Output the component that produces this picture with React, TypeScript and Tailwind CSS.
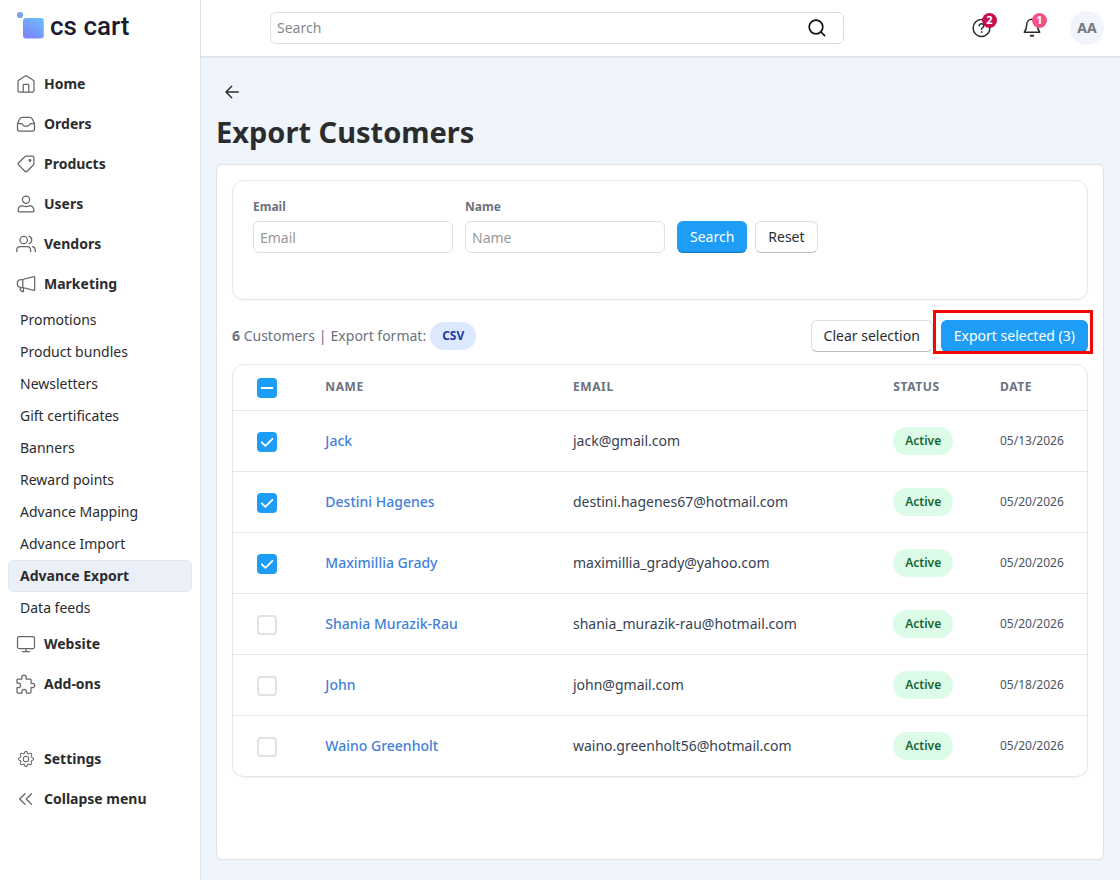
import { useEffect, useRef, useState } from 'react'
import type { InputHTMLAttributes, ReactNode } from 'react'
import { BsGear } from 'react-icons/bs'

interface Customer {
  id: number
  name: string
  email: string
  status: string
  date: string
}

interface NavItem {
  label: string
  icon: ReactNode
}

const customers: Customer[] = [
  { id: 1, name: 'Jack', email: 'jack@gmail.com', status: 'Active', date: '05/13/2026' },
  { id: 2, name: 'Destini Hagenes', email: 'destini.hagenes67@hotmail.com', status: 'Active', date: '05/20/2026' },
  { id: 3, name: 'Maximillia Grady', email: 'maximillia_grady@yahoo.com', status: 'Active', date: '05/20/2026' },
  { id: 4, name: 'Shania Murazik-Rau', email: 'shania_murazik-rau@hotmail.com', status: 'Active', date: '05/20/2026' },
  { id: 5, name: 'John', email: 'john@gmail.com', status: 'Active', date: '05/18/2026' },
  { id: 6, name: 'Waino Greenholt', email: 'waino.greenholt56@hotmail.com', status: 'Active', date: '05/20/2026' },
]

const marketingLinks = [
  'Promotions',
  'Product bundles',
  'Newsletters',
  'Gift certificates',
  'Banners',
  'Reward points',
  'Advance Mapping',
  'Advance Import',
  'Advance Export',
  'Data feeds',
]

function Icon({ children }: { children: ReactNode }) {
  return (
    <svg
      viewBox="0 0 20 20"
      className="size-5 shrink-0 text-[#666666]"
      fill="none"
      stroke="currentColor"
      strokeWidth="1.25"
      strokeLinecap="round"
      strokeLinejoin="round"
      aria-hidden="true"
    >
      {children}
    </svg>
  )
}

const topItems: NavItem[] = [
  {
    label: 'Home',
    icon: (
      <Icon>
        <path d="M2 7.6q0-.8.7-1.3L9.2 2q.8-.5 1.6 0l6.500 4.300q.7.500.7 1.300v8.900q0 1.700-1.700 1.700H3.700Q2 18.200 2 16.500zM7.200 18.200v-7q0-.8.8-.8h4q.8 0 .8.8v7" />
      </Icon>
    ),
  },
  {
    label: 'Orders',
    icon: (
      <Icon>
        <path d="M1.500 9.500 4 4.500q.6-1.200 2-1.200h8q1.400 0 2 1.200l2.500 5v5.500q0 2-2 2h-13q-2 0-2-2zM1.500 9.500H5q1 0 1.400.9.500 1.600 2 1.600h3.200q1.500 0 2-1.600.4-.9 1.400-.9h3.500" />
      </Icon>
    ),
  },
  {
    label: 'Products',
    icon: (
      <Icon>
        <path d="M10.200 2.200h6q1.700 0 1.700 1.700v5.700q0 .8-.6 1.400l-6.200 6.200q-1.100 1.100-2.200 0l-6.300-6.300q-1.100-1.100 0-2.200l6.200-5.900q.6-.6 1.400-.6z" />
        <circle cx="14" cy="6.500" r=".8" fill="currentColor" />
      </Icon>
    ),
  },
  {
    label: 'Users',
    icon: (
      <Icon>
        <circle cx="10" cy="5.700" r="3.600" />
        <path d="M6.400 11.700C3.600 12 2 14 2 16.800q0 1.100 1.100 1.100h13.800q1.100 0 1.100-1.100c0-2.800-1.600-4.800-4.400-5.100-2.400 1.100-4.800 1.100-7.200 0z" />
      </Icon>
    ),
  },
  {
    label: 'Vendors',
    icon: (
      <Icon>
        <circle cx="7.700" cy="6" r="3.700" />
        <path d="M13.200 2.300a3.900 3.900 0 0 1 0 7.300M.8 17.700v-1.500q0-3.500 3.500-3.500h6.800q3.500 0 3.500 3.500v1.500M16.500 12.700q2.800.6 2.800 3.600v1.400" />
      </Icon>
    ),
  },
  {
    label: 'Marketing',
    icon: (
      <Icon>
        <path d="M6.800 5.500 17.700 2.600q1-.2 1 .8v12.200q0 1-1 .8L6.800 13.500M6.800 5.500v8H5.500q-4.200 0-4.200-4t4.200-4zM4 13.400q.1 3.700 2.700 4.300.8.100.8-.6v-3.400" />
      </Icon>
    ),
  },
]

const lowerItems: NavItem[] = [
  {
    label: 'Website',
    icon: (
      <Icon>
        <rect x="1.500" y="2.500" width="17" height="12.200" rx="1.800" />
        <path d="M10 14.700v2.700M6.400 17.500h7.200" />
      </Icon>
    ),
  },
  {
    label: 'Add-ons',
    icon: (
      <Icon>
        <path d="M1 8.700V6q0-1 1-1h3.800V3.200a2.200 2.200 0 0 1 4.400 0V5H14q1 0 1 1v3.300h1.600a2.200 2.200 0 0 1 0 4.400H15V18q0 1-1 1h-3.600v-1.400a2.200 2.200 0 0 0-4.400 0V19H2q-1 0-1-1v-4.400h1.400a2.200 2.200 0 0 0 0-4.400H1z" />
      </Icon>
    ),
  },
]

const footerItems: NavItem[] = [
  {
    label: 'Settings',
    icon: (
      <span className="flex size-5 items-center justify-center text-[#666666]">
        <BsGear size={16} />
      </span>
    ),
  },
  {
    label: 'Collapse menu',
    icon: (
      <Icon>
        <path d="M9 4.700 3.700 10 9 15.300M15.500 4.700 10.200 10l5.300 5.300" />
      </Icon>
    ),
  },
]

function NavLink({ label, icon }: NavItem) {
  return (
    <a href="#" className="flex h-10 items-center gap-2 px-4 text-sm font-bold text-[#2b2c2e]">
      {icon}
      {label}
    </a>
  )
}

function Sidebar() {
  return (
    <aside className="w-[201px] shrink-0 border-r border-[#dfe3ea] bg-white">
      <a href="#" className="flex h-16 items-start gap-1 px-4 pt-2 text-[#1b1b2f]">
        <svg viewBox="0 0 30 32" className="h-8 w-[30px]" aria-hidden="true">
          <defs>
            <linearGradient id="logo" x1="0.2" y1="1" x2="0.8" y2="0">
              <stop offset="0" stopColor="#7b83fb" />
              <stop offset="1" stopColor="#6dbcfb" />
            </linearGradient>
          </defs>
          <circle cx="4" cy="7" r="3.100" fill="#7aa2ee" />
          <rect x="7" y="10" width="20.800" height="20.600" rx="3" fill="url(#logo)" />
        </svg>
        <span className="font-['Roboto',sans-serif] text-[26px] leading-9 font-medium">cs cart</span>
      </a>
      <nav>
        {topItems.map((item) => (
          <NavLink key={item.label} {...item} />
        ))}
        <ul className="px-2">
          {marketingLinks.map((label) => (
            <li key={label}>
              <a
                href="#"
                className={
                  label === 'Advance Export'
                    ? 'flex h-8 items-center rounded-md border border-[#e1e6ee] bg-[#ebf0f8] px-[11px] text-sm font-bold text-[#2b2c2e]'
                    : 'flex h-8 items-center px-3 text-sm text-[#2b2c2e]'
                }
              >
                {label}
              </a>
            </li>
          ))}
        </ul>
        {lowerItems.map((item) => (
          <NavLink key={item.label} {...item} />
        ))}
      </nav>
      <div className="mt-[35px]">
        {footerItems.map((item) => (
          <NavLink key={item.label} {...item} />
        ))}
      </div>
    </aside>
  )
}

function Header() {
  return (
    <header className="flex h-[57px] items-center border-b border-[#dfe3ea] bg-white pr-4 pl-[69px] shadow-xs">
      <form className="flex h-8 w-full max-w-[574px] items-center rounded-md border border-[#dcdfe4] pr-4">
        <input
          type="search"
          aria-label="Search"
          placeholder="Search"
          className="min-w-0 flex-1 px-1.5 text-sm outline-none placeholder:text-[#85878c]"
        />
        <button type="button" aria-label="Submit search">
          <svg viewBox="0 0 20 20" className="size-5" fill="none" stroke="#111111" strokeWidth="1.700" strokeLinecap="round">
            <circle cx="9" cy="9" r="6.800" />
            <path d="m14 14 3.600 3.600" />
          </svg>
        </button>
      </form>
      <div className="ml-auto flex items-center gap-7">
        <button type="button" aria-label="Help" className="relative">
          <svg viewBox="0 0 22 22" className="size-[22px]" fill="none" stroke="#2b2c2e" strokeWidth="1.500" strokeLinecap="round">
            <circle cx="11.500" cy="11" r="8.400" />
            <path d="M9.200 8.800q.2-2.100 2.300-2.100 2.300 0 2.300 2 0 1.200-1.200 1.900-1.100.6-1.100 1.700" />
            <circle cx="11.500" cy="15" r=".4" fill="#2b2c2e" strokeWidth="1" />
          </svg>
          <span className="absolute -top-1 -right-[5px] flex size-[15px] items-center justify-center rounded-full bg-[#c8104f] text-[11px] font-bold text-white">
            2
          </span>
        </button>
        <button type="button" aria-label="Notifications" className="relative">
          <svg viewBox="0 0 22 22" className="size-[22px]" fill="none" stroke="#2b2c2e" strokeWidth="1.500" strokeLinecap="round" strokeLinejoin="round">
            <path d="M12 2.300c-3.500 0-5.300 2.500-5.300 5.500 0 3.600-.8 5.300-2.400 7.500h15.400c-1.600-2.200-2.400-3.900-2.400-7.500 0-3-1.800-5.500-5.300-5.500zM10.500 18.400q1.500 1.400 3 0" />
          </svg>
          <span className="absolute -top-1 -right-[5px] flex size-[15px] items-center justify-center rounded-full bg-[#f0528c] text-[11px] font-bold text-white">
            1
          </span>
        </button>
        <button
          type="button"
          className="flex size-[34px] items-center justify-center rounded-full bg-[#f1f4fb] text-sm font-bold text-[#75777c]"
        >
          AA
        </button>
      </div>
    </header>
  )
}

interface CheckboxProps extends InputHTMLAttributes<HTMLInputElement> {
  partial?: boolean
}

function Checkbox({ partial = false, checked, ...props }: CheckboxProps) {
  const ref = useRef<HTMLInputElement>(null)

  useEffect(() => {
    if (ref.current) ref.current.indeterminate = partial
  }, [partial])

  return (
    <span className="relative mt-0.5 block size-5">
      <input
        ref={ref}
        type="checkbox"
        checked={checked}
        className="block size-5 appearance-none rounded border-2 border-[#dfe2e7] bg-white checked:border-[#1d9df5] checked:bg-[#1d9df5] indeterminate:border-[#1d9df5] indeterminate:bg-[#1d9df5]"
        {...props}
      />
      {(partial || checked) && (
        <svg
          viewBox="0 0 20 20"
          className="pointer-events-none absolute inset-0 size-5"
          fill="none"
          stroke="white"
          strokeWidth="1.800"
          strokeLinecap="round"
          strokeLinejoin="round"
        >
          <path d={partial ? 'M4.500 10h11' : 'm4.800 10.300 3.600 3.500 7-7'} />
        </svg>
      )}
    </span>
  )
}

const primaryButton =
  'h-8 rounded-md border border-[#1d9df5] border-b-[#1478bd] bg-[#1d9df5] px-3 text-sm whitespace-nowrap text-white'
const secondaryButton =
  'h-8 rounded-md border border-[#dcdfe4] border-b-[#b9bfc7] bg-white px-3 text-sm whitespace-nowrap text-[#2b2c2e]'

function Field({ id, label }: { id: string; label: string }) {
  return (
    <div className="w-[200px]">
      <label htmlFor={id} className="block pb-1.5 text-xs leading-4 font-bold text-[#6b7280]">
        {label}
      </label>
      <input
        id={id}
        type="text"
        placeholder={label}
        className="block h-8 w-full rounded-md border border-[#dcdfe4] px-1.5 text-sm placeholder:text-[#999999]"
      />
    </div>
  )
}

export default function App() {
  const [selected, setSelected] = useState<number[]>([1, 2, 3])

  const toggle = (id: number) => {
    setSelected((ids) => (ids.includes(id) ? ids.filter((x) => x !== id) : [...ids, id]))
  }

  const allSelected = selected.length === customers.length

  return (
    <div className="flex min-h-screen bg-[#f0f4fb] font-['Noto_Sans',sans-serif] text-[#2b2c2e]">
      <Sidebar />
      <div className="flex min-w-0 flex-1 flex-col">
        <Header />
        <main className="flex flex-1 flex-col pt-[19px] pr-4 pb-5 pl-[15px]">
          <a href="#" aria-label="Back" className="flex size-8 items-center justify-center">
            <svg viewBox="0 0 16 16" className="size-4" fill="none" stroke="#2b2c2e" strokeWidth="1.500" strokeLinecap="round" strokeLinejoin="round">
              <path d="M14.200 8H2M7.700 2.300 2 8l5.700 5.700" />
            </svg>
          </a>
          <h1 className="pt-1 pb-3 text-[29px] leading-10 font-bold">Export Customers</h1>

          <div className="flex-1 rounded-md border border-[#dfe3ea] bg-white p-[15px]">
            <form className="flex h-[120px] items-start gap-3 rounded-xl border border-[#e3e6ea] px-5 pt-[18px] shadow-xs">
              <Field id="email" label="Email" />
              <Field id="name" label="Name" />
              <div className="flex gap-2 pt-[22px]">
                <button type="button" className={primaryButton}>
                  Search
                </button>
                <button type="reset" className={secondaryButton}>
                  Reset
                </button>
              </div>
            </form>

            <div className="flex items-center justify-between py-3 pt-5">
              <div className="flex items-center gap-1 text-sm text-[#6b7280]">
                <p>
                  <strong>{customers.length}</strong> Customers
                </p>
                <span>|</span>
                <p>Export format:</p>
                <span className="flex h-7 items-center rounded-full bg-[#dbe8fe] px-3 text-xs font-bold text-[#1e3a9e]">
                  CSV
                </span>
              </div>
              <div className="flex gap-2">
                <button type="button" className={secondaryButton} onClick={() => setSelected([])}>
                  Clear selection
                </button>
                <div className="relative">
                  <button type="button" className={primaryButton}>
                    Export selected ({selected.length})
                  </button>
                  <span className="pointer-events-none absolute -top-2.5 -right-[5px] -bottom-0.5 -left-2 border-3 border-[#f50505]" />
                </div>
              </div>
            </div>

            <div className="overflow-hidden rounded-xl border border-[#e3e6ea] shadow-xs">
              <table className="w-full table-fixed text-left">
                <thead>
                  <tr className="h-[45px] border-b border-[#e3e6ea] text-xs tracking-wider text-[#6b7280]">
                    <th className="w-[68px] pl-6">
                      <Checkbox
                        aria-label="Select all customers"
                        partial={selected.length > 0 && !allSelected}
                        checked={allSelected}
                        onChange={() => setSelected(allSelected ? [] : customers.map((c) => c.id))}
                      />
                    </th>
                    <th className="w-[29%] pl-6">NAME</th>
                    <th className="w-3/8 pl-6">EMAIL</th>
                    <th className="w-1/8 pl-6">STATUS</th>
                    <th className="w-[13%] pl-6">DATE</th>
                  </tr>
                </thead>
                <tbody>
                  {customers.map((customer) => (
                    <tr key={customer.id} className="h-[61px] border-b border-[#e3e6ea] last:border-b-0">
                      <td className="pl-6">
                        <Checkbox
                          aria-label={customer.name}
                          checked={selected.includes(customer.id)}
                          onChange={() => toggle(customer.id)}
                        />
                      </td>
                      <td className="pl-6 text-sm font-medium">
                        <a href="#" className="text-[#3f7fdb]">
                          {customer.name}
                        </a>
                      </td>
                      <td className="pl-6 text-sm text-[#374151]">{customer.email}</td>
                      <td className="pl-6">
                        <span className="inline-flex h-7 items-center rounded-full bg-[#dcfce7] px-3 text-xs font-semibold text-[#166534]">
                          {customer.status}
                        </span>
                      </td>
                      <td className="pl-6 text-xs text-[#4b5563]">{customer.date}</td>
                    </tr>
                  ))}
                </tbody>
              </table>
            </div>
          </div>
        </main>
      </div>
    </div>
  )
}
